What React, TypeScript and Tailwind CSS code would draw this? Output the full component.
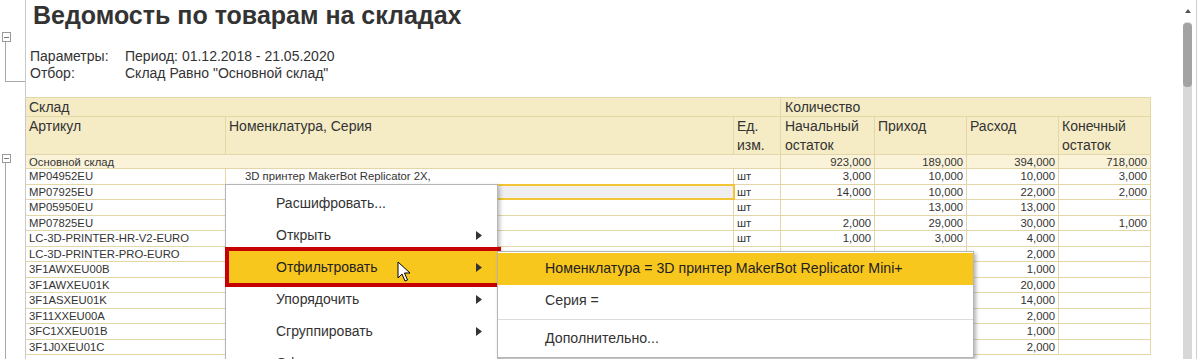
const cols = "grid grid-cols-[200px_508px_47px_94px_92px_92px_92px]";

// rows below the submenu keep only the visible "Расход" value
const rows = [
  ["MP04952EU", "3D принтер MakerBot Replicator 2X,", "шт", "3,000", "10,000", "10,000", "3,000"],
  ["MP07925EU", "", "шт", "14,000", "10,000", "22,000", "2,000"],
  ["MP05950EU", "", "шт", "", "13,000", "13,000", ""],
  ["MP07825EU", "", "шт", "2,000", "29,000", "30,000", "1,000"],
  ["LC-3D-PRINTER-HR-V2-EURO", "", "шт", "1,000", "3,000", "4,000", ""],
  ["LC-3D-PRINTER-PRO-EURO", "", "", "", "", "2,000", ""],
  ["3F1AWXEU00B", "", "", "", "", "1,000", ""],
  ["3F1AWXEU01K", "", "", "", "", "20,000", ""],
  ["3F1ASXEU01K", "", "", "", "", "14,000", ""],
  ["3F11XXEU00A", "", "", "", "", "2,000", ""],
  ["3FC1XXEU01B", "", "", "", "", "1,000", ""],
  ["3F1J0XEU01C", "", "", "", "", "2,000", ""],
];

function Arrow() {
  return (
    <svg width="6" height="9" viewBox="0 0 6 9" className="shrink-0">
      <path d="M0 0 L6 4.5 L0 9 Z" fill="#333" />
    </svg>
  );
}

function Cursor() {
  return (
    <svg width="14" height="22" viewBox="0 0 14 22" className="absolute left-[397px] top-[261px]">
      <path
        d="M1 1 L1 17 L5 13 L8 20 L10.5 19 L7.5 12 L13 12 Z"
        fill="#fff"
        stroke="#000"
        strokeWidth="1"
        strokeLinejoin="round"
      />
    </svg>
  );
}

function TreeBox() {
  return (
    <div className="ml-[2px] w-[9px] h-[10px] border border-[#9a9a9a] bg-white flex items-center justify-center">
      <div className="w-[5px] h-[1px] bg-[#777]" />
    </div>
  );
}

export default function App() {
  return (
    <div className="relative w-[1200px] h-[359px] overflow-hidden bg-white text-[#333] font-['Liberation_Sans',Arial,sans-serif]">
      <div className="flex h-full">
        {/* gutter with group toggles */}
        <div className="w-[26px] shrink-0 border-r border-[#c9c9c9] flex flex-col">
          <div className="h-[33px]" />
          <TreeBox />
          <div className="ml-[5px] w-[1px] h-[40px] bg-[#a8a8a8]" />
          <div className="ml-[5px] w-[20px] h-[1px] bg-[#a8a8a8]" />
          <div className="h-[73px]" />
          <TreeBox />
          <div className="ml-[5px] w-[1px] h-[200px] bg-[#a8a8a8]" />
        </div>

        {/* report */}
        <div className="w-[1125px] shrink-0">
          <div className="h-[48px] pl-[7px] text-[25px] leading-[30px] font-bold text-[#333]">
            Ведомость по товарам на складах
          </div>
          <div className="pl-[4px] text-[14px] leading-[17px] text-[#333]">
            <div className="flex">
              <span className="w-[95px]">Параметры:</span>
              <span>Период: 01.12.2018 - 21.05.2020</span>
            </div>
            <div className="flex">
              <span className="w-[95px]">Отбор:</span>
              <span>Склад Равно "Основной склад"</span>
            </div>
          </div>
          <div className="h-[15px]" />

          {/* header */}
          <div className={`${cols} bg-[#f5ecc6] border-t border-[#e3d7a8] text-[14px] text-[#333]`}>
            <div className="col-span-3 h-[19px] px-[3px] leading-[18px] border-r border-b border-[#e3d7a8]">Склад</div>
            <div className="col-span-4 h-[19px] px-[4px] leading-[18px] border-r border-b border-[#e3d7a8]">Количество</div>
            <div className="h-[38px] px-[3px] leading-[19px] border-r border-b border-[#e3d7a8]">Артикул</div>
            <div className="h-[38px] px-[3px] leading-[19px] border-r border-b border-[#e3d7a8]">Номенклатура, Серия</div>
            <div className="h-[38px] px-[3px] leading-[19px] border-r border-b border-[#e3d7a8]">
              Ед.
              <br />
              изм.
            </div>
            <div className="h-[38px] px-[4px] leading-[19px] border-r border-b border-[#e3d7a8]">
              Начальный
              <br />
              остаток
            </div>
            <div className="h-[38px] px-[3px] leading-[19px] border-r border-b border-[#e3d7a8]">Приход</div>
            <div className="h-[38px] px-[3px] leading-[19px] border-r border-b border-[#e3d7a8]">Расход</div>
            <div className="h-[38px] px-[3px] leading-[19px] border-r border-b border-[#e3d7a8]">
              Конечный
              <br />
              остаток
            </div>
          </div>

          {/* group row */}
          <div className={`${cols} bg-[#faf3da] text-[11.3px] leading-[14px] text-[#333]`}>
            <div className="col-span-3 h-[14px] px-[3px] border-r border-b border-[#e3d7a8]">Основной склад</div>
            <div className="h-[14px] px-[3px] text-right border-r border-b border-[#e3d7a8]">923,000</div>
            <div className="h-[14px] px-[3px] text-right border-r border-b border-[#e3d7a8]">189,000</div>
            <div className="h-[14px] px-[3px] text-right border-r border-b border-[#e3d7a8]">394,000</div>
            <div className="h-[14px] px-[3px] text-right border-r border-b border-[#e3d7a8]">718,000</div>
          </div>

          {/* data rows */}
          {rows.map((r, i) => (
            <div
              key={i}
              className={`${cols} text-[11.3px] text-[#333] ${i % 2 === 0 ? "h-[16px] leading-[15px]" : "h-[15px] leading-[14px]"}`}
            >
              <div className="px-[3px] border-r border-b border-[#e3d7a8] whitespace-nowrap">{r[0]}</div>
              {i === 1 ? (
                <div className="relative -ml-[1px] -mt-[1px] -mr-[1px] bg-[#efefef] border-2 border-[#f3c534]" />
              ) : (
                <div className="pl-[19px] border-r border-b border-[#e3d7a8] whitespace-nowrap">{r[1]}</div>
              )}
              <div className="px-[3px] border-r border-b border-[#e3d7a8]">{r[2]}</div>
              <div className="px-[3px] text-right border-r border-b border-[#e3d7a8]">{r[3]}</div>
              <div className="px-[3px] text-right border-r border-b border-[#e3d7a8]">{r[4]}</div>
              <div className="px-[3px] text-right border-r border-b border-[#e3d7a8]">{r[5]}</div>
              <div className="px-[3px] text-right border-r border-b border-[#e3d7a8]">{r[6]}</div>
            </div>
          ))}
        </div>

        <div className="w-[32px] shrink-0" />

        {/* scrollbar */}
        <div className="w-[9px] shrink-0 flex flex-col items-center">
          <div className="h-[22px] flex items-center justify-center">
            <svg width="6" height="4" viewBox="0 0 6 4">
              <path d="M0 4 L3 0 L6 4 Z" fill="#555" />
            </svg>
          </div>
          <div className="flex-1 w-[9px] bg-[#d8d8d8] rounded-t-[4px] pt-[1px]">
            <div className="w-[9px] h-[64px] bg-[#a3a3a3] rounded-[4px]" />
          </div>
        </div>
        <div className="w-[4px] shrink-0" />
        <div className="w-[1px] shrink-0 bg-[#cfcfcf]" />
      </div>

      {/* context menu */}
      <div className="absolute left-[225px] top-[184px] w-[273px] h-[200px] bg-white border border-[#b5b5b5] shadow-[2px_2px_4px_rgba(0,0,0,0.25)] pt-[2px] text-[14px] text-[#333]">
        <div className="h-[32px] pl-[50px] flex items-center">Расшифровать...</div>
        <div className="h-[32px] pl-[50px] pr-[15px] flex items-center justify-between">
          <span>Открыть</span>
          <Arrow />
        </div>
        <div className="relative h-[32px] pl-[50px] pr-[15px] flex items-center justify-between bg-[#f8c71e] text-[#222]">
          <span>Отфильтровать</span>
          <Arrow />
          <div className="absolute -left-[1px] -right-[4px] -top-[4px] -bottom-[4px] border-4 border-[#c40000]" />
        </div>
        <div className="h-[32px] pl-[50px] pr-[15px] flex items-center justify-between">
          <span>Упорядочить</span>
          <Arrow />
        </div>
        <div className="h-[32px] pl-[50px] pr-[15px] flex items-center justify-between">
          <span>Сгруппировать</span>
          <Arrow />
        </div>
        <div className="h-[32px] pl-[50px] flex items-center">Оформить...</div>
      </div>

      {/* submenu */}
      <div className="absolute left-[497px] top-[251px] w-[477px] bg-white border border-[#b5b5b5] shadow-[2px_2px_4px_rgba(0,0,0,0.3)] py-[1px] text-[14.2px] text-[#333]">
        <div className="h-[32px] pl-[47px] flex items-center bg-[#f8c71e] text-[#222]">
          Номенклатура = 3D принтер MakerBot Replicator Mini+
        </div>
        <div className="h-[32px] pl-[47px] flex items-center">Серия =</div>
        <div className="py-[2px]">
          <div className="h-[1px] bg-[#dcdcdc]" />
        </div>
        <div className="h-[34px] pl-[47px] flex items-center">Дополнительно...</div>
      </div>

      <Cursor />
    </div>
  );
}
